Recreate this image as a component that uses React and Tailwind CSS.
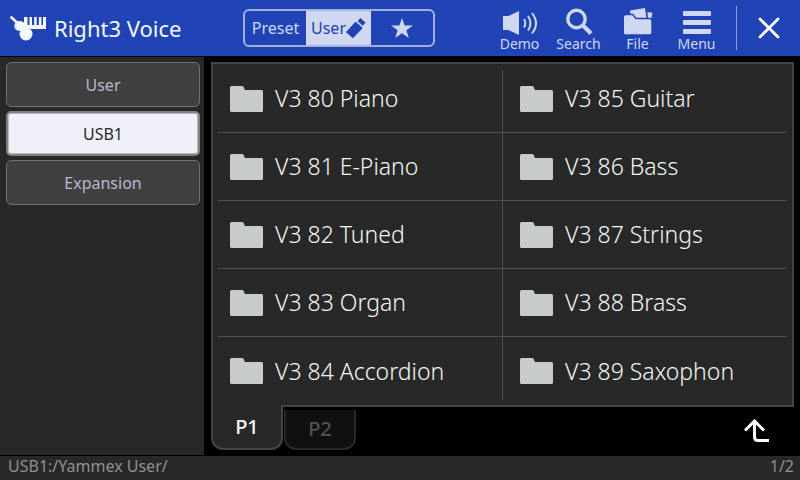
import { useState } from 'react';
import clsx from 'clsx';

const sources = ['User', 'USB1', 'Expansion'];

const columns = [
  ['V3 80 Piano', 'V3 81 E-Piano', 'V3 82 Tuned', 'V3 83 Organ', 'V3 84 Accordion'],
  ['V3 85 Guitar', 'V3 86 Bass', 'V3 87 Strings', 'V3 88 Brass', 'V3 89 Saxophon'],
];

const tools = [
  { label: 'Demo', Icon: DemoIcon },
  { label: 'Search', Icon: SearchIcon },
  { label: 'File', Icon: FileIcon },
  { label: 'Menu', Icon: MenuIcon },
];

function VoiceIcon() {
  return (
    <svg className="h-[25px] w-9" viewBox="0 0 36 25" fill="currentColor" aria-hidden="true">
      <path d="M14 1h3.500v8h2V1H22v8h2.200V1h2.500v8h2.200V1h2.500v8h1.600V1h3v12H21l-3-1-4-2z" />
      <ellipse cx="9.500" cy="10" rx="5.200" ry="5" />
      <path d="M9 13l4-7 7 5-2 6z" />
      <circle cx="16" cy="18" r="6.500" />
      <path d="M1.500 1.500l6.500 6" stroke="currentColor" strokeWidth="2.600" strokeLinecap="round" />
    </svg>
  );
}

function UsbIcon() {
  return (
    <svg className="h-5 w-5" viewBox="0 0 20 20" fill="currentColor" aria-hidden="true">
      <path d="M10.200 4.200l6 5.200q.6.600.1 1.200L7.600 19.600q-.6.600-1.300.1L.6 14.800q-.6-.6-.1-1.200L9 4.300q.6-.6 1.200-.1z" />
      <path d="M14.300 0L19.500 4.500l-2.700 3.300-5.200-4.500z" />
    </svg>
  );
}

function StarIcon() {
  return (
    <svg className="h-5 w-[22px]" viewBox="0 0 22 20" fill="currentColor" aria-hidden="true">
      <path d="M11 0l2.600 7.500H22l-6.600 4.800 2.400 7.700-6.800-4.700L4.200 20l2.400-7.700L0 7.500h8.400z" />
    </svg>
  );
}

function DemoIcon() {
  return (
    <svg className="h-7 w-9" viewBox="0 0 36 28" aria-hidden="true">
      <path d="M1 8h5.500L17 3v24L6.500 22H1z" fill="currentColor" />
      <g fill="none" stroke="currentColor" strokeWidth="2">
        <path d="M22 11q2.500 4 0 8.500" />
        <path d="M26 8q5 7.200 0 14.500" />
        <path d="M30 5q8 10.200 0 20.500" />
      </g>
    </svg>
  );
}

function SearchIcon() {
  return (
    <svg className="h-7 w-7" viewBox="0 0 28 28" fill="none" stroke="currentColor" aria-hidden="true">
      <circle cx="11.500" cy="11" r="8.700" strokeWidth="3.400" />
      <path d="M18 17.500l8 8" strokeWidth="4" />
    </svg>
  );
}

function FileIcon() {
  return (
    <svg className="h-7 w-[30px]" viewBox="0 0 30 28" fill="currentColor" aria-hidden="true">
      <path d="M7 2.500L22 0l2 14H8z" />
      <path d="M24.500 4l5 .8-1.500 7-3-.5z" />
      <path
        className="stroke-[#2043b6]"
        strokeWidth="1.400"
        d="M.3 9q0-2.500 2.500-2.500h7L13 10.500h13.500q2.500 0 2.500 2.500v11.500q0 2.500-2.500 2.500H2.800Q.3 27 .3 24.500z"
      />
    </svg>
  );
}

function MenuIcon() {
  return (
    <svg className="h-7 w-7" viewBox="0 0 28 28" fill="currentColor" aria-hidden="true">
      <rect y="3" width="28" height="5" rx="1" />
      <rect y="12" width="28" height="5" rx="1" />
      <rect y="21" width="28" height="5" rx="1" />
    </svg>
  );
}

function CloseIcon() {
  return (
    <svg className="h-[22px] w-[22px]" viewBox="0 0 22 22" stroke="currentColor" strokeWidth="2.800" strokeLinecap="round" aria-hidden="true">
      <path d="M2 2l18 18M20 2L2 20" />
    </svg>
  );
}

function FolderIcon() {
  return (
    <svg className="h-[26px] w-[33px] shrink-0 text-[#c8ccc8]" viewBox="0 0 33 26" fill="currentColor" aria-hidden="true">
      <path d="M0 1.500Q0 0 1.500 0H12q1.500 0 2 1.500l.8 2.500H31.500Q33 4 33 5.500v19q0 1.500-1.500 1.500h-30Q0 26 0 24.500z" />
    </svg>
  );
}

function UpIcon() {
  return (
    <svg className="h-6 w-[26px]" viewBox="0 0 26 24" fill="none" stroke="currentColor" strokeWidth="3" aria-hidden="true">
      <path d="M1 11.500L10.500 2 20 11.500" />
      <path d="M10.500 2v16q0 3.500 3.500 3.500h11" />
    </svg>
  );
}

function Header() {
  return (
    <header className="flex h-14 items-center bg-[#2043b6] pl-2.5 text-[#d0d8f0]">
      <div className="flex w-[233px] items-center gap-2 text-[#f4f8fc]">
        <VoiceIcon />
        <h1 className="text-[22px] leading-7">Right3 Voice</h1>
      </div>
      <div className="flex h-[38px] w-48 overflow-hidden rounded-md border-2 border-[#a4b0e0] text-base">
        <button className="w-[61px] whitespace-nowrap">Preset</button>
        <button className="flex w-[65px] items-center justify-center bg-[#d0d8f0] text-[#2043b6]">
          User
          <UsbIcon />
        </button>
        <button className="flex flex-1 items-center justify-center" aria-label="Favorite">
          <StarIcon />
        </button>
      </div>
      <nav className="ml-auto flex items-center">
        {tools.map(({ label, Icon }) => (
          <button key={label} className="flex w-[59px] flex-col items-center pt-1 text-sm leading-4">
            <Icon />
            {label}
          </button>
        ))}
        <span className="ml-2.5 h-11 w-px bg-[#8c9cd8]" />
        <button className="flex w-[63px] justify-center text-white" aria-label="Close">
          <CloseIcon />
        </button>
      </nav>
    </header>
  );
}

function Sidebar() {
  const [active, setActive] = useState('USB1');

  return (
    <aside className="flex w-[204px] shrink-0 flex-col gap-1 bg-[#282828] py-[5px] pr-1 pl-1.5">
      {sources.map((name) => (
        <button
          key={name}
          onClick={() => setActive(name)}
          className={clsx(
            'h-[45px] rounded-[5px] text-base',
            name === active
              ? 'border-2 border-[#808080] bg-[#f0f0f8] text-[#282828] inset-ring inset-ring-[#b8b8bc]'
              : 'border border-[#707070] bg-[#404040] text-[#b8b8d0]'
          )}
        >
          {name}
        </button>
      ))}
    </aside>
  );
}

function VoiceColumn({ items, className }) {
  return (
    <ul className="flex-1 divide-y divide-[#505050]">
      {items.map((name) => (
        <li key={name} className="h-[68px]">
          <button className={clsx('flex h-full w-full items-center gap-3 text-left text-[23px] font-light', className)}>
            <FolderIcon />
            {name}
          </button>
        </li>
      ))}
    </ul>
  );
}

export default function App() {
  return (
    <div className="flex min-h-screen flex-col bg-black font-['Noto_Sans',sans-serif]">
      <Header />
      <div className="flex flex-1 py-px">
        <Sidebar />
        <main className="flex-1 pt-[5px] pr-1.5 pl-[7px] text-[#f4f8f4]">
          <div className="flex border-2 border-[#444444] bg-[#282828] px-[5px] pt-px">
            <VoiceColumn items={columns[0]} className="pl-3" />
            <span className="my-[5px] w-px bg-[#505050]" />
            <VoiceColumn items={columns[1]} className="pl-[17px]" />
          </div>
          <div className="flex items-start gap-px text-xl leading-6 font-medium">
            <button className="relative -mt-0.5 h-[45px] w-[72px] rounded-b-xl border-2 border-t-0 border-[#444444] bg-[#282828]">
              P1
            </button>
            <button className="mt-[3px] h-10 w-[72px] rounded-b-xl border-2 border-t-0 border-[#282828] bg-[#101010] text-[#505050]">
              P2
            </button>
            <button className="mt-3 mr-6 ml-auto text-white" aria-label="Up one folder">
              <UpIcon />
            </button>
          </div>
        </main>
      </div>
      <footer className="flex h-6 items-start justify-between bg-[#282828] pr-1.5 pl-2 text-base leading-5 text-[#909090]">
        <span>USB1:/Yammex User/</span>
        <span>1/2</span>
      </footer>
    </div>
  );
}
